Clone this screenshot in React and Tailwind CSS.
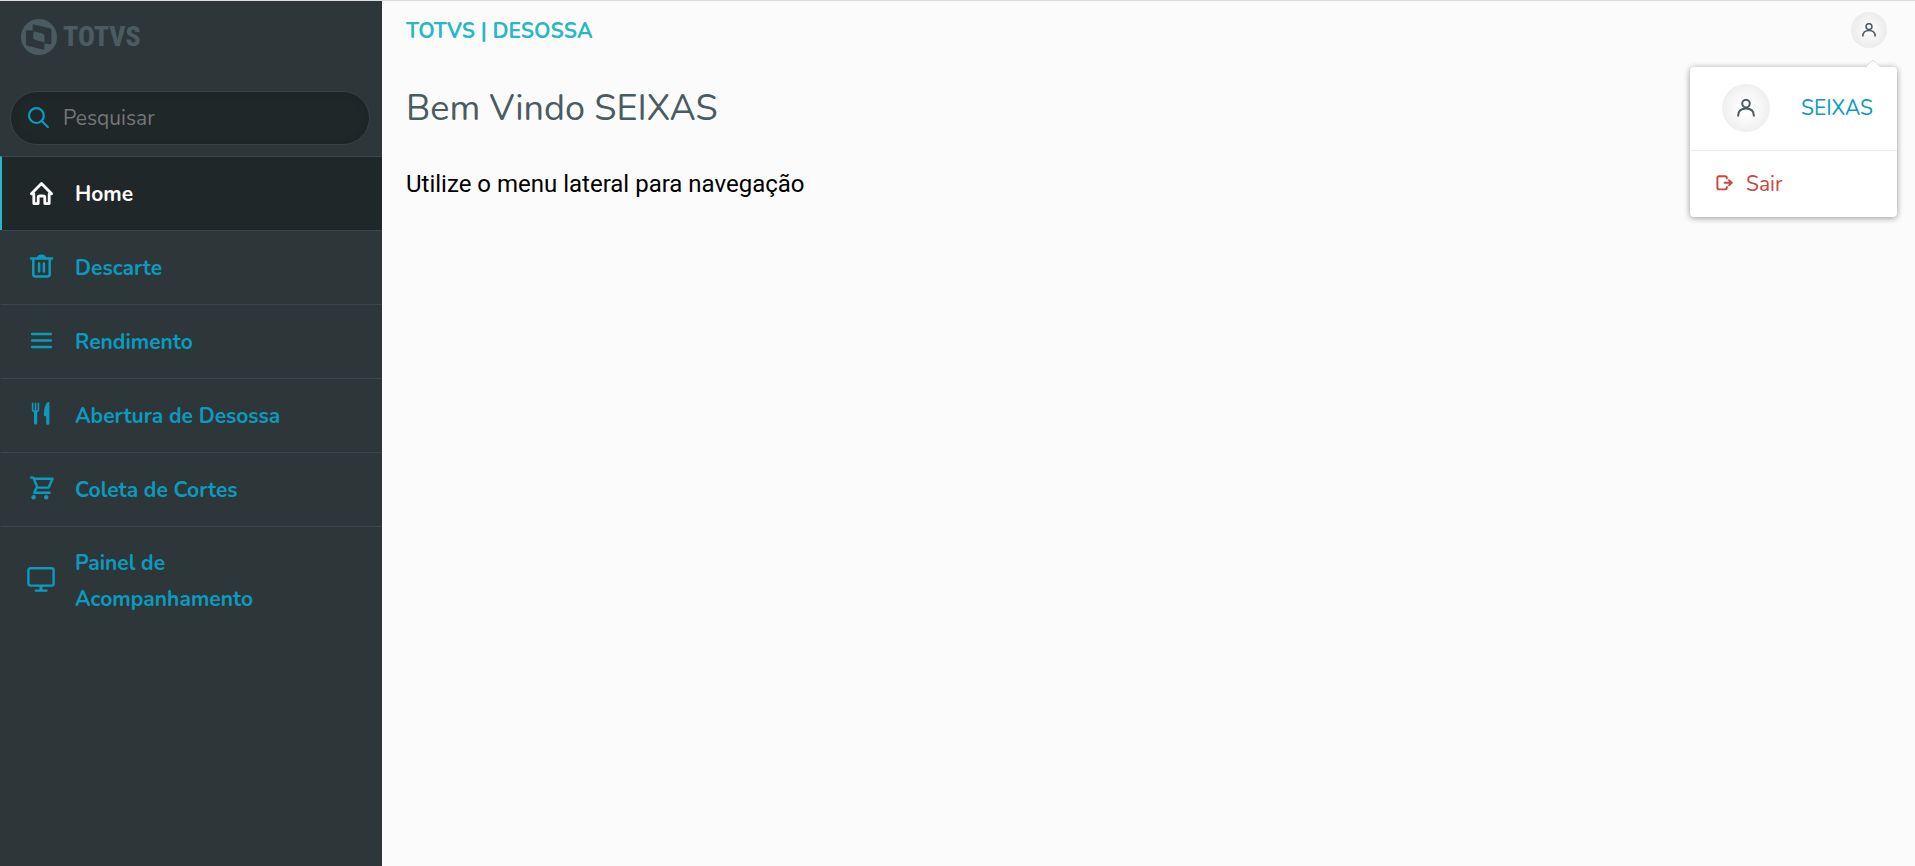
import React, { useState } from 'react';

const stroke = {
    fill: 'none',
    stroke: 'currentColor',
    strokeLinecap: 'round',
    strokeLinejoin: 'round',
};

const HomeIcon = () => (
    <svg viewBox="0 0 28 28" className="size-7 shrink-0" {...stroke} strokeWidth="2.8" aria-hidden="true">
        <path d="M14.5 3.6 4.4 13.8H6.8V23.6H11.2V17.6Q11.2 16 12.8 16H16.2Q17.8 16 17.8 17.6V23.6H22.2V13.8H24.6Z" />
    </svg>
);

const TrashIcon = () => (
    <svg viewBox="0 0 28 28" className="size-7 shrink-0" {...stroke} strokeWidth="2.5" aria-hidden="true">
        <path d="M4 4.4H25" />
        <path d="M9.5 4Q11 .6 14.5 .6T19.5 4Z" fill="currentColor" stroke="none" />
        <path d="M6.3 5V20Q6.3 22.6 8.9 22.6H20.1Q22.7 22.6 22.7 20V5" />
        <path d="M12.1 9.6V17.4M16.9 9.6V17.4" />
    </svg>
);

const MenuIcon = () => (
    <svg viewBox="0 0 28 28" className="size-7 shrink-0" {...stroke} strokeWidth="2.6" aria-hidden="true">
        <path d="M5.2 6H23.8M5.2 12.5H23.8M5.2 19H23.8" />
    </svg>
);

const CutleryIcon = () => (
    <svg viewBox="0 0 28 28" className="size-7 shrink-0" {...stroke} strokeWidth="1.6" aria-hidden="true">
        <path d="M5.6 1.2V7.5Q5.6 9.7 8.5 9.7T11.4 7.5V1.2M8.5 1.2V9.7" />
        <path d="M8.6 9.7V21" strokeWidth="3.2" />
        <path d="M22.4.1V21.2Q22.4 22.8 20.8 22.8T19.2 21.2V14.2H18Q16.9 14.2 16.9 12.2 16.9 6.1 19 2 20.2-.2 22.4.1Z" fill="currentColor" stroke="none" />
    </svg>
);

const CartIcon = () => (
    <svg viewBox="0 0 28 28" className="size-7 shrink-0" {...stroke} strokeWidth="2.4" aria-hidden="true">
        <path d="M4 1.6H6.4L10.4 11.6H21.6L25.6 2.8H7" />
        <path d="M9.4 12 7.2 16.8H22.6" />
        <circle cx="6.6" cy="21.2" r="2.2" fill="currentColor" stroke="none" />
        <circle cx="19.2" cy="21.2" r="2.2" fill="currentColor" stroke="none" />
    </svg>
);

const MonitorIcon = () => (
    <svg viewBox="0 0 28 28" className="size-7 shrink-0" {...stroke} strokeWidth="2.4" aria-hidden="true">
        <rect x="1.4" y="1.2" width="25.2" height="17.4" rx="2" />
        <path d="M14 19V23.2" strokeWidth="3" strokeLinecap="butt" />
        <path d="M8.8 23.6H19.4" />
    </svg>
);

const SearchIcon = () => (
    <svg viewBox="0 0 22 22" className="size-[22px] shrink-0" {...stroke} strokeWidth="2.2" aria-hidden="true">
        <circle cx="9.4" cy="8.6" r="7.4" />
        <path d="M14.8 14 20.8 20" />
    </svg>
);

const UserIcon = ({ className }) => (
    <svg viewBox="0 0 18 18" className={className} {...stroke} strokeWidth="2" aria-hidden="true">
        <circle cx="9" cy="4.6" r="3.8" />
        <path d="M1 17.4Q1 9.6 9 9.6T17 17.4" strokeLinecap="butt" />
    </svg>
);

const ExitIcon = () => (
    <svg viewBox="0 0 18 18" className="size-[18px] shrink-0" {...stroke} strokeWidth="1.9" aria-hidden="true">
        <path d="M10.8 3.4V2.8Q10.8 1.2 9.2 1.2H3Q1.4 1.2 1.4 2.8V12.8Q1.4 14.4 3 14.4H9.2Q10.8 14.4 10.8 12.8V12" />
        <path d="M8.6 7.8H15.8M13 5.2 15.8 7.8 13 10.4" />
    </svg>
);

const LogoMark = () => (
    <svg viewBox="0 0 36 36" className="size-9 shrink-0" aria-hidden="true">
        <path
            fill="currentColor"
            fillRule="evenodd"
            d="M18 0A18 18 0 1 1 18 36 18 18 0 1 1 18 0ZM12.4 5.4Q11.6 5.2 11.6 6V11.4L5.8 11.2Q5 11.2 5 12V25Q5 26.4 6.4 26.8L21.8 30.6Q23.4 31 23.4 29.6V24.6L29 25.2Q30.4 25.2 30.4 24V11.4Q30.4 9.8 28.8 9.2ZM12.6 12.2 21.4 14.4Q23.4 15 23.4 16.8V23.4L14 20.8Q12.2 20.2 12.2 18.4Z"
        />
    </svg>
);

const menuItems = [
    { id: 'home', label: 'Home', icon: HomeIcon },
    { id: 'descarte', label: 'Descarte', icon: TrashIcon },
    { id: 'rendimento', label: 'Rendimento', icon: MenuIcon },
    { id: 'abertura', label: 'Abertura de Desossa', icon: CutleryIcon },
    { id: 'coleta', label: 'Coleta de Cortes', icon: CartIcon },
    { id: 'painel', label: 'Painel de Acompanhamento', icon: MonitorIcon },
];

const Sidebar = ({ active, onSelect }) => {
    const [search, setSearch] = useState('');

    const items = menuItems.filter(item =>
        item.label.toLowerCase().includes(search.toLowerCase())
    );

    return (
        <aside className="w-[382px] shrink-0 bg-[#2d3739]">
            <div className="flex items-center gap-1.5 px-[21px] pt-[18px] text-[#4a5c60]">
                <LogoMark />
                <span className="font-['Roboto_Condensed',Roboto,sans-serif] text-[28px] leading-9 font-extrabold">
                    TOTVS
                </span>
            </div>

            <label className="mt-9 mr-3 mb-[11px] ml-2.5 flex h-[54px] items-center gap-3.5 rounded-full border border-[#364345] bg-[#1f2729] px-4 text-[#0c9abe] shadow-[inset_0_0_8px_rgba(0,0,0,0.12)]">
                <SearchIcon />
                <input
                    type="text"
                    aria-label="Pesquisar"
                    placeholder="Pesquisar"
                    value={search}
                    onChange={(e) => setSearch(e.target.value)}
                    className="min-w-0 flex-1 bg-transparent text-[21px] leading-9 text-white outline-none placeholder:text-[#757575]"
                />
            </label>

            <nav>
                {items.map(({ id, label, icon: Icon }) => (
                    <a
                        key={id}
                        href={`#${id}`}
                        onClick={() => onSelect(id)}
                        className={`flex min-h-[74px] items-center gap-5 border-t border-l-2 border-t-[#3b484b] py-[18px] pr-16 pl-[25px] text-[21px] leading-9 font-bold ${active === id
                                ? 'border-l-[#29b6c5] bg-[#1f2729] text-white'
                                : 'border-l-transparent text-[#0c9abe] hover:bg-[#1f2729]'
                            }`}
                    >
                        <Icon />
                        <span>{label}</span>
                    </a>
                ))}
            </nav>
        </aside>
    );
};

const ProfileMenu = () => {
    const [open, setOpen] = useState(true);

    return (
        <div className="relative">
            <button
                type="button"
                aria-label="Perfil"
                onClick={() => setOpen(!open)}
                className="flex size-9 items-center justify-center rounded-full bg-[radial-gradient(circle_closest-side,#fafafa_20%,#ececec_100%)] text-[#4a5c60]"
            >
                <UserIcon className="size-[14px]" />
            </button>

            {open && (
                <div className="absolute top-[55px] -right-2.5 w-[207px] rounded bg-white shadow-[0_1px_6px_rgba(0,0,0,0.4)]">
                    <svg viewBox="0 0 16 8" className="absolute -top-[7px] right-4 h-2 w-4" aria-hidden="true">
                        <path d="M0 8 8 0 16 8Z" fill="#fff" />
                        <path d="M0 7.4 8 0 16 7.4" fill="none" stroke="#dedede" />
                    </svg>
                    <div className="flex items-center justify-between border-b border-[#eaeaea] pt-[17px] pr-6 pb-[18px] pl-8">
                        <span className="flex size-12 items-center justify-center rounded-full bg-[radial-gradient(circle_closest-side,#ffffff_20%,#efefef_100%)] text-[#4a5c60]">
                            <UserIcon className="size-[18px]" />
                        </span>
                        <span className="text-[21px] leading-9 text-[#0c9abe]">SEIXAS</span>
                    </div>
                    <button
                        type="button"
                        className="flex w-full items-center gap-3 py-[15px] pl-[26px] text-[21px] leading-9 text-[#c64840] hover:bg-gray-50"
                    >
                        <ExitIcon />
                        Sair
                    </button>
                </div>
            )}
        </div>
    );
};

const App = () => {
    const [active, setActive] = useState('home');

    return (
        <div className="flex min-h-screen border-t border-[#dcdcdc] bg-[#fbfbfb] font-[Nunito,Lato,sans-serif]">
            <Sidebar active={active} onSelect={setActive} />

            <div className="min-w-0 flex-1">
                <header className="flex h-[60px] items-start justify-between pt-[11px] pr-7 pl-6">
                    <span className="text-[21px] leading-[38px] font-bold text-[#29b6c5]">TOTVS | DESOSSA</span>
                    <ProfileMenu />
                </header>

                <main className="px-6 pt-6">
                    <h1 className="text-[36px] leading-12 text-[#4a5c60]">Bem Vindo SEIXAS</h1>
                    <p className="mt-[33px] font-[Roboto,sans-serif] text-2xl leading-9 text-black">
                        Utilize o menu lateral para navegação
                    </p>
                </main>
            </div>
        </div>
    );
};

export default App;
